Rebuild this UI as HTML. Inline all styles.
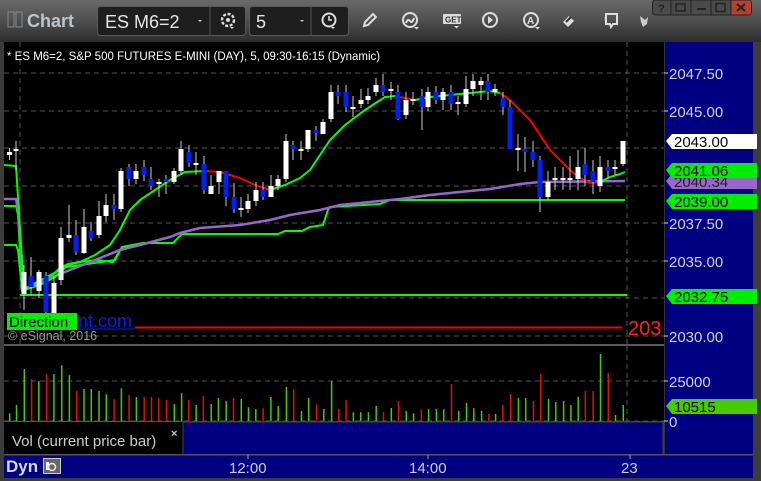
<!DOCTYPE html>
<html><head><meta charset="utf-8"><style>
html,body{margin:0;padding:0;background:#3a3a3a;}
body{width:761px;height:481px;overflow:hidden;position:relative;font-family:"Liberation Sans",Arial,sans-serif;}
svg{position:absolute;left:0;top:0;}
</style></head><body>
<svg width="761" height="481" viewBox="0 0 761 481" xmlns="http://www.w3.org/2000/svg" font-family="Liberation Sans, Arial, sans-serif">
<defs>
<linearGradient id="tb" x1="0" y1="0" x2="0" y2="1">
<stop offset="0" stop-color="#6a6a6a"/><stop offset="0.5" stop-color="#4e4e4e"/><stop offset="1" stop-color="#2c2c2c"/></linearGradient>
</defs>
<rect x="0" y="0" width="761" height="481" fill="#3c3c3c"/>
<rect x="0" y="0" width="761" height="42" fill="url(#tb)"/>
<!-- title -->
<rect x="8" y="12" width="6" height="15" fill="none" stroke="#888" stroke-width="1"/>
<rect x="16" y="12" width="6" height="15" fill="none" stroke="#888" stroke-width="1"/>
<text x="27" y="27" font-size="18" font-weight="bold" fill="#bcc4cc">Chart</text>
<!-- symbol box -->
<rect x="97.5" y="6.5" width="148" height="29" rx="3" fill="#1e1e1e" stroke="#5a5a5a"/>
<line x1="210" y1="7" x2="210" y2="35" stroke="#555"/>
<text x="105" y="28" font-size="18" fill="#e6e6e6">ES M6=2</text>
<path d="M198 20 l4 0 l-2 2z" fill="#ccc"/>
<circle cx="228" cy="20" r="6" fill="none" stroke="#ddd" stroke-width="2.4" stroke-dasharray="3 1.6"/>
<circle cx="228" cy="20" r="2" fill="#ddd"/>
<path d="M230 27 l4 0 l-2 2z" fill="#ddd"/>
<rect x="249.5" y="6.5" width="99" height="29" rx="3" fill="#1e1e1e" stroke="#5a5a5a"/>
<line x1="311" y1="7" x2="311" y2="35" stroke="#555"/>
<text x="256" y="28" font-size="18" fill="#e6e6e6">5</text>
<path d="M300 20 l4 0 l-2 2z" fill="#ccc"/>
<circle cx="329" cy="20" r="6.5" fill="none" stroke="#ddd" stroke-width="2"/>
<path d="M329 16 v4 h3" fill="none" stroke="#ddd" stroke-width="1.6"/>
<path d="M331 27 l4 0 l-2 2z" fill="#ddd"/>
<!-- toolbar icons -->
<g fill="none" stroke="#ddd" stroke-width="2">
<path d="M364 26 l1-4 l8-8 l3 3 l-8 8z"/>
<circle cx="410" cy="20" r="7"/><path d="M406 23 q2-5 4-2 q2 3 4-3"/>
<circle cx="490" cy="20" r="7"/>
<circle cx="531" cy="20" r="7"/>
<path d="M606 14 h11 v10 h-4 l-2 3 l-1-3 h-4z"/>
<path d="M605.5 17 v4" stroke-width="1.5"/>
</g>
<rect x="443" y="14" width="18" height="10" rx="1" fill="#ddd"/>
<text x="445" y="22.5" font-size="8" font-weight="bold" fill="#333">GET</text>
<path d="M454 26 l5 0 l-2.5 2.5z" fill="#ddd"/><path d="M414 27 l5 0 l-2.5 2.5z" fill="#ddd"/><path d="M535 27 l5 0 l-2.5 2.5z" fill="#ddd"/>
<path d="M488 16 l5 4 l-5 4z" fill="#ddd"/>
<text x="527" y="24" font-size="10" font-weight="bold" fill="#ddd">A</text>
<path d="M563 22 l6-6 l5 5 l-6 6z" fill="#ddd"/><path d="M566 22 l5-5" stroke="#333" stroke-width="2"/>
<path d="M640 16 l5 4 l3-3 l-1 7 l-4 3 l-2-5z" fill="#ccc"/>
<!-- window buttons -->
<rect x="652.5" y="0" width="99" height="15" rx="3" fill="#4a4a4a" stroke="#222"/>
<rect x="731" y="0.5" width="20" height="14" rx="2" fill="#b8402c"/>
<g stroke="#222" stroke-width="1"><line x1="671" y1="0" x2="671" y2="15"/><line x1="691" y1="0" x2="691" y2="15"/><line x1="711" y1="0" x2="711" y2="15"/><line x1="731" y1="0" x2="731" y2="15"/></g>
<text x="658" y="12" font-size="11" font-weight="bold" fill="#222">?</text>
<rect x="676" y="4" width="9" height="7" fill="none" stroke="#222" stroke-width="1.5"/>
<line x1="697" y1="9" x2="706" y2="9" stroke="#222" stroke-width="2"/>
<rect x="716" y="3.5" width="9" height="8" fill="none" stroke="#222" stroke-width="1.5"/>
<path d="M737 4 l8 7 M745 4 l-8 7" stroke="#222" stroke-width="2"/>

<!-- chart areas -->
<rect x="4" y="42" width="660" height="302" fill="#000"/>
<rect x="4" y="346" width="660" height="75" fill="#000"/>
<rect x="4" y="344" width="660" height="2" fill="#5a5a5a"/>
<rect x="664" y="42" width="89" height="413" fill="#000080"/>
<rect x="664" y="42" width="1" height="413" fill="#333"/>
<rect x="4" y="421" width="179" height="34" fill="#000"/>
<rect x="4" y="421" width="179" height="1" fill="#555"/>
<rect x="183" y="422" width="480" height="33" fill="#000080" stroke="#444"/>
<rect x="4" y="455" width="749" height="23" fill="#000080"/>
<rect x="4" y="454" width="749" height="1.5" fill="#555"/>

<!-- grid -->
<g stroke="#555" stroke-dasharray="5 4" stroke-width="1">
<line x1="4" y1="73" x2="664" y2="73"/><line x1="4" y1="111" x2="664" y2="111"/><line x1="4" y1="148" x2="664" y2="148"/><line x1="4" y1="186" x2="664" y2="186"/><line x1="4" y1="223" x2="664" y2="223"/><line x1="4" y1="261" x2="664" y2="261"/><line x1="4" y1="298" x2="664" y2="298"/><line x1="4" y1="336" x2="664" y2="336"/>
<line x1="4" y1="381" x2="664" y2="381"/><line x1="4" y1="421" x2="664" y2="421"/>
<line x1="20" y1="42" x2="20" y2="344"/><line x1="627" y1="42" x2="627" y2="344"/><line x1="627" y1="346" x2="627" y2="421"/>
</g>

<text x="7" y="60" font-size="11.5" fill="#fff">* ES M6=2, S&amp;P 500 FUTURES E-MINI (DAY), 5, 09:30-16:15 (Dynamic)</text>

<!-- horizontal levels -->
<line x1="20" y1="295" x2="627" y2="295" stroke="#00ff00" stroke-width="2"/>
<line x1="135" y1="327.5" x2="622" y2="327.5" stroke="#ff0000" stroke-width="2"/>
<!-- slow green -->
<polyline fill="none" stroke="#00ff00" stroke-width="2" points="4,245 16,245 18,250 22,290 60,270 67,267 115,260 122,247 143,243 173,243 182,234 278,234 285,231 302,231 310,227 323,225 328,210 330,207 380,204 390,200 625,200"/>
<!-- second green -->
<polyline fill="none" stroke="#00ff00" stroke-width="2" points="4,206 16,206 18,215 22,290 45,282 60,268 68,264 80,262 97,260 113,262 122,247 140,245"/>
<!-- vwap purple -->
<polyline fill="none" stroke="#9966cc" stroke-width="2.5" points="4,199 16,199 18,210 24,290 60,274 80,266 100,258 120,250 140,245 170,237 180,233 200,228 240,225 270,220 290,215 320,210 340,205 370,202 400,199 430,195 460,192 490,189 520,184 540,182 625,181"/>
<!-- fast MA -->
<polyline fill="none" stroke="#00ff00" stroke-width="2" points="4,165 16,166 24,290 40,285 55,277 68,265 80,262 95,255 110,245 120,230 130,210 140,200 155,190 170,180 185,172 205,171"/>
<polyline fill="none" stroke="#ff0000" stroke-width="2" points="205,171 220,172 240,178 255,185 270,190"/>
<polyline fill="none" stroke="#00ff00" stroke-width="2" points="270,190 285,185 300,178 310,170 320,155 330,140 345,125 365,110 385,97 395,96"/>
<polyline fill="none" stroke="#ff0000" stroke-width="2" points="395,96 405,98 415,100"/>
<polyline fill="none" stroke="#00ff00" stroke-width="2" points="415,100 430,97 450,95 470,93 490,91 500,93"/>
<polyline fill="none" stroke="#ff0000" stroke-width="2" points="500,93 510,100 520,110 530,120 540,135 550,150 560,160 570,170 580,178 590,183 600,182"/>
<polyline fill="none" stroke="#00ff00" stroke-width="2" points="600,182 610,177 620,174 625,172"/>

<!-- wicks -->
<path stroke="#ccc" stroke-width="1" fill="none" d="M9.5 148V160M16 141V170M24 265V310M31 257V295M39 270V298M46 272V320M54 276V320M61 227V285M69 205V242M76 220V255M84 209V254M91 222V241M99 201V238M106 194V222M114 194V220M121 168V212M129 164V186M136 164V184M144 160V181M151 167V190M159 179V197M166 175V194M174 168V184M181 141V175M189 145V167M196 152V175M204 156V194M211 175V194M219 171V194M226 171V206M234 183V213M241 197V217M248 194V213M256 182V206M263 182V200M271 175V197M278 175V190M286 134V182M293 141V160M301 141V160M308 130V152M316 126V141M323 119V134M331 85V122M338 85V104M346 85V112M353 96V117M361 89V108M368 88V104M376 78V96M383 74V96M391 82V100M398 85V120M406 92V119M413 92V105M422 89V130M428 87V111M436 86V104M443 88V110M451 85V110M458 96V115M466 76V107M473 74V96M481 77V100M488 74V100M495 84V96M503 92V115M510 100V149M518 134V171M525 137V172M533 141V167M540 156V212M548 171V200M555 167V190M563 167V190M570 156V190M578 150V190M585 148V186M593 160V194M600 156V192M608 160V178M615 160V175M623 141V166"/>
<!-- white bodies -->
<g fill="#fff">
<rect x="7" y="152" width="5" height="3"/><rect x="13.5" y="149" width="5" height="2"/><rect x="21.5" y="272" width="5" height="22"/><rect x="36.5" y="272" width="5" height="19"/><rect x="51.5" y="283" width="5" height="34"/><rect x="58.5" y="238" width="5" height="42"/><rect x="66.5" y="235" width="5" height="3"/><rect x="81.5" y="227" width="5" height="26"/><rect x="96.5" y="216" width="5" height="19"/><rect x="103.5" y="205" width="5" height="11"/><rect x="118.5" y="171" width="5" height="38"/><rect x="133.5" y="171" width="5" height="8"/><rect x="156.5" y="182" width="5" height="2"/><rect x="171.5" y="171" width="5" height="11"/><rect x="178.5" y="149" width="5" height="22"/><rect x="193.5" y="163" width="5" height="2"/><rect x="208.5" y="186" width="5" height="8"/><rect x="216.5" y="171" width="5" height="11"/><rect x="238.5" y="208" width="5" height="2"/><rect x="245.5" y="201" width="5" height="8"/><rect x="253.5" y="190" width="5" height="11"/><rect x="268.5" y="186" width="5" height="11"/><rect x="275.5" y="179" width="5" height="7"/><rect x="283.5" y="141" width="5" height="38"/><rect x="298.5" y="149" width="5" height="2"/><rect x="305.5" y="130" width="5" height="19"/><rect x="320.5" y="122" width="5" height="12"/><rect x="328.5" y="92" width="5" height="27"/><rect x="350.5" y="107" width="5" height="2"/><rect x="358.5" y="100" width="5" height="4"/><rect x="365.5" y="96" width="5" height="4"/><rect x="373.5" y="85" width="5" height="7"/><rect x="388.5" y="89" width="5" height="2"/><rect x="403.5" y="100" width="5" height="15"/><rect x="410.5" y="99" width="5" height="2"/><rect x="425.5" y="92" width="5" height="15"/><rect x="440.5" y="92" width="5" height="8"/><rect x="455.5" y="102" width="5" height="2"/><rect x="463.5" y="89" width="5" height="15"/><rect x="470.5" y="81" width="5" height="8"/><rect x="478.5" y="81" width="5" height="4"/><rect x="492.5" y="89" width="5" height="3"/><rect x="515.5" y="148" width="5" height="2"/><rect x="545.5" y="182" width="5" height="15"/><rect x="552.5" y="178" width="5" height="2"/><rect x="560.5" y="178" width="5" height="2"/><rect x="567.5" y="178" width="5" height="2"/><rect x="575.5" y="167" width="5" height="12"/><rect x="597.5" y="167" width="5" height="19"/><rect x="612.5" y="167" width="5" height="2"/><rect x="620.5" y="141" width="5" height="23"/>
</g>
<!-- blue bodies -->
<g fill="#0022ee">
<rect x="28.5" y="276" width="5" height="11"/><rect x="43.5" y="276" width="5" height="36"/><rect x="73.5" y="235" width="5" height="17"/><rect x="88.5" y="231" width="5" height="7"/><rect x="111.5" y="205" width="5" height="4"/><rect x="126.5" y="167" width="5" height="12"/><rect x="141.5" y="167" width="5" height="8"/><rect x="148.5" y="179" width="5" height="7"/><rect x="163.5" y="179" width="5" height="3"/><rect x="186.5" y="152" width="5" height="11"/><rect x="201.5" y="164" width="5" height="26"/><rect x="223.5" y="171" width="5" height="26"/><rect x="231.5" y="197" width="5" height="12"/><rect x="260.5" y="190" width="5" height="7"/><rect x="290.5" y="145" width="5" height="4"/><rect x="313.5" y="130" width="5" height="3"/><rect x="335.5" y="92" width="5" height="4"/><rect x="343.5" y="92" width="5" height="15"/><rect x="380.5" y="85" width="5" height="7"/><rect x="395.5" y="92" width="5" height="27"/><rect x="419.5" y="96" width="5" height="11"/><rect x="433.5" y="92" width="5" height="8"/><rect x="448.5" y="92" width="5" height="12"/><rect x="485.5" y="81" width="5" height="11"/><rect x="500.5" y="98" width="5" height="9"/><rect x="507.5" y="107" width="5" height="42"/><rect x="522.5" y="149" width="5" height="3"/><rect x="530.5" y="152" width="5" height="8"/><rect x="537.5" y="160" width="5" height="37"/><rect x="582.5" y="164" width="5" height="11"/><rect x="590.5" y="171" width="5" height="11"/><rect x="605.5" y="167" width="5" height="4"/>
</g>

<!-- overlays text -->
<rect x="7" y="313" width="70" height="17" fill="#00ee00"/>
<text x="9" y="327" font-size="15" fill="#000">Direction</text>
<text x="78" y="327" font-size="18" fill="#0022ee">nt.com</text>
<line x1="78" y1="329" x2="135" y2="329" stroke="#0022ee" stroke-width="1"/>
<text x="8" y="340" font-size="12.5" fill="#999">© eSignal, 2016</text>
<text x="628" y="335" font-size="20" fill="#ff2020">203</text>
<rect x="664" y="42" width="89" height="300" fill="none"/>

<!-- price axis labels -->
<g font-size="15" fill="#d0d0d0">
<text x="669" y="79">2047.50</text><text x="669" y="117">2045.00</text><text x="669" y="229">2037.50</text><text x="669" y="267">2035.00</text><text x="669" y="342">2030.00</text>
<text x="669" y="387">25000</text><text x="669" y="427">0</text>
</g>
<g stroke="#d0d0d0" stroke-width="1"><line x1="664" y1="73" x2="668" y2="73"/><line x1="664" y1="111" x2="668" y2="111"/><line x1="664" y1="223" x2="668" y2="223"/><line x1="664" y1="261" x2="668" y2="261"/><line x1="664" y1="336" x2="668" y2="336"/><line x1="664" y1="381" x2="668" y2="381"/><line x1="664" y1="421" x2="668" y2="421"/></g>
<path d="M666 181 l6-7 h85 v15 h-85z" fill="#9966cc"/><text x="674" y="187" font-size="15" fill="#222">2040.34</text>
<path d="M666 141 l6-7 h85 v15 h-85z" fill="#fff"/><text x="674" y="147" font-size="15" fill="#000">2043.00</text>
<path d="M666 170 l6-7 h85 v15 h-85z" fill="#00ee00"/><text x="674" y="176" font-size="15" fill="#000">2041.06</text>
<path d="M666 201 l6-7 h85 v15 h-85z" fill="#00ee00"/><text x="674" y="207" font-size="15" fill="#000">2039.00</text>
<path d="M666 296 l6-7 h85 v15 h-85z" fill="#00ee00"/><text x="674" y="302" font-size="15" fill="#000">2032.75</text>
<path d="M666 406 l6-7 h85 v15 h-85z" fill="#44cc00"/><text x="674" y="412" font-size="15" fill="#000">10515</text>

<!-- volume bars -->
<path stroke="#44cc00" stroke-width="1.5" d="M9.7 421V413.3M16.5 421V405M24.3 421V369M38.8 421V381M53.9 421V374M61.7 421V365.3M69.4 421V375M84 421V389M91.3 421V389M99 421V391M106.3 421V394.3M121.4 421V388.3M136.4 421V397M174.3 421V404M181.6 421V393.3M196.1 421V405M211.2 421V404M218.4 421V398M226.2 421V401.3M241.3 421V399M248.5 421V407.3M255.8 421V409M270.9 421V397M278.2 421V406M286.4 421V387M301.5 421V411M308.7 421V398M323.8 421V409M331.6 421V381M353.4 421V412.3M360.7 421V412.3M368.4 421V412.3M376.2 421V406M391.3 421V408M406.3 421V411M413.6 421V413.3M428.6 421V409.3M436.4 421V409M443.7 421V409.3M458.7 421V411M466.5 421V403M473.8 421V408.3M481.6 421V411M495.6 421V414M518.4 421V398M525.7 421V398M548.5 421V399M555.8 421V402M563.6 421V401M570.9 421V405M578.2 421V397M600.5 421V354M615.5 421V415M623.3 421V405"/>
<path stroke="#dd1111" stroke-width="1.5" d="M31.6 421V379.3M46.6 421V374M76.7 421V390.7M114.1 421V399M129.1 421V395M144.2 421V396.7M151.5 421V397M158.7 421V398.3M166.5 421V400M188.8 421V400M203.4 421V396M233.5 421V398M263.1 421V408.3M293.7 421V389.3M316.5 421V404.3M338.8 421V409M346.1 421V400M383.5 421V412M398.5 421V401M421.4 421V409.3M451.5 421V384M488.8 421V414M502.9 421V405M510.7 421V394M533.5 421V401M540.8 421V374M585.4 421V391M593.2 421V391M608.3 421V373"/>

<text x="12" y="446" font-size="15" fill="#cccccc">Vol (current price bar)</text>
<text x="171" y="437" font-size="11" font-weight="bold" fill="#ccc">×</text>

<!-- time axis -->
<g stroke="#aaa"><line x1="248" y1="455" x2="248" y2="459"/><line x1="428" y1="455" x2="428" y2="459"/><line x1="630" y1="455" x2="630" y2="459"/></g>
<g font-size="15" fill="#d0d0d0"><text x="229" y="473">12:00</text><text x="409" y="473">14:00</text><text x="621" y="473">23</text></g>
<text x="6" y="472" font-size="17" font-weight="bold" fill="#d8d8d8">Dyn</text>
<rect x="43.5" y="458.5" width="17" height="15" fill="#666" stroke="#ccc"/>
<circle cx="52" cy="467" r="3.5" fill="none" stroke="#eee" stroke-width="1.5"/>
<rect x="46" y="462" width="3" height="8" fill="#eee"/>
</svg>
</body></html>
